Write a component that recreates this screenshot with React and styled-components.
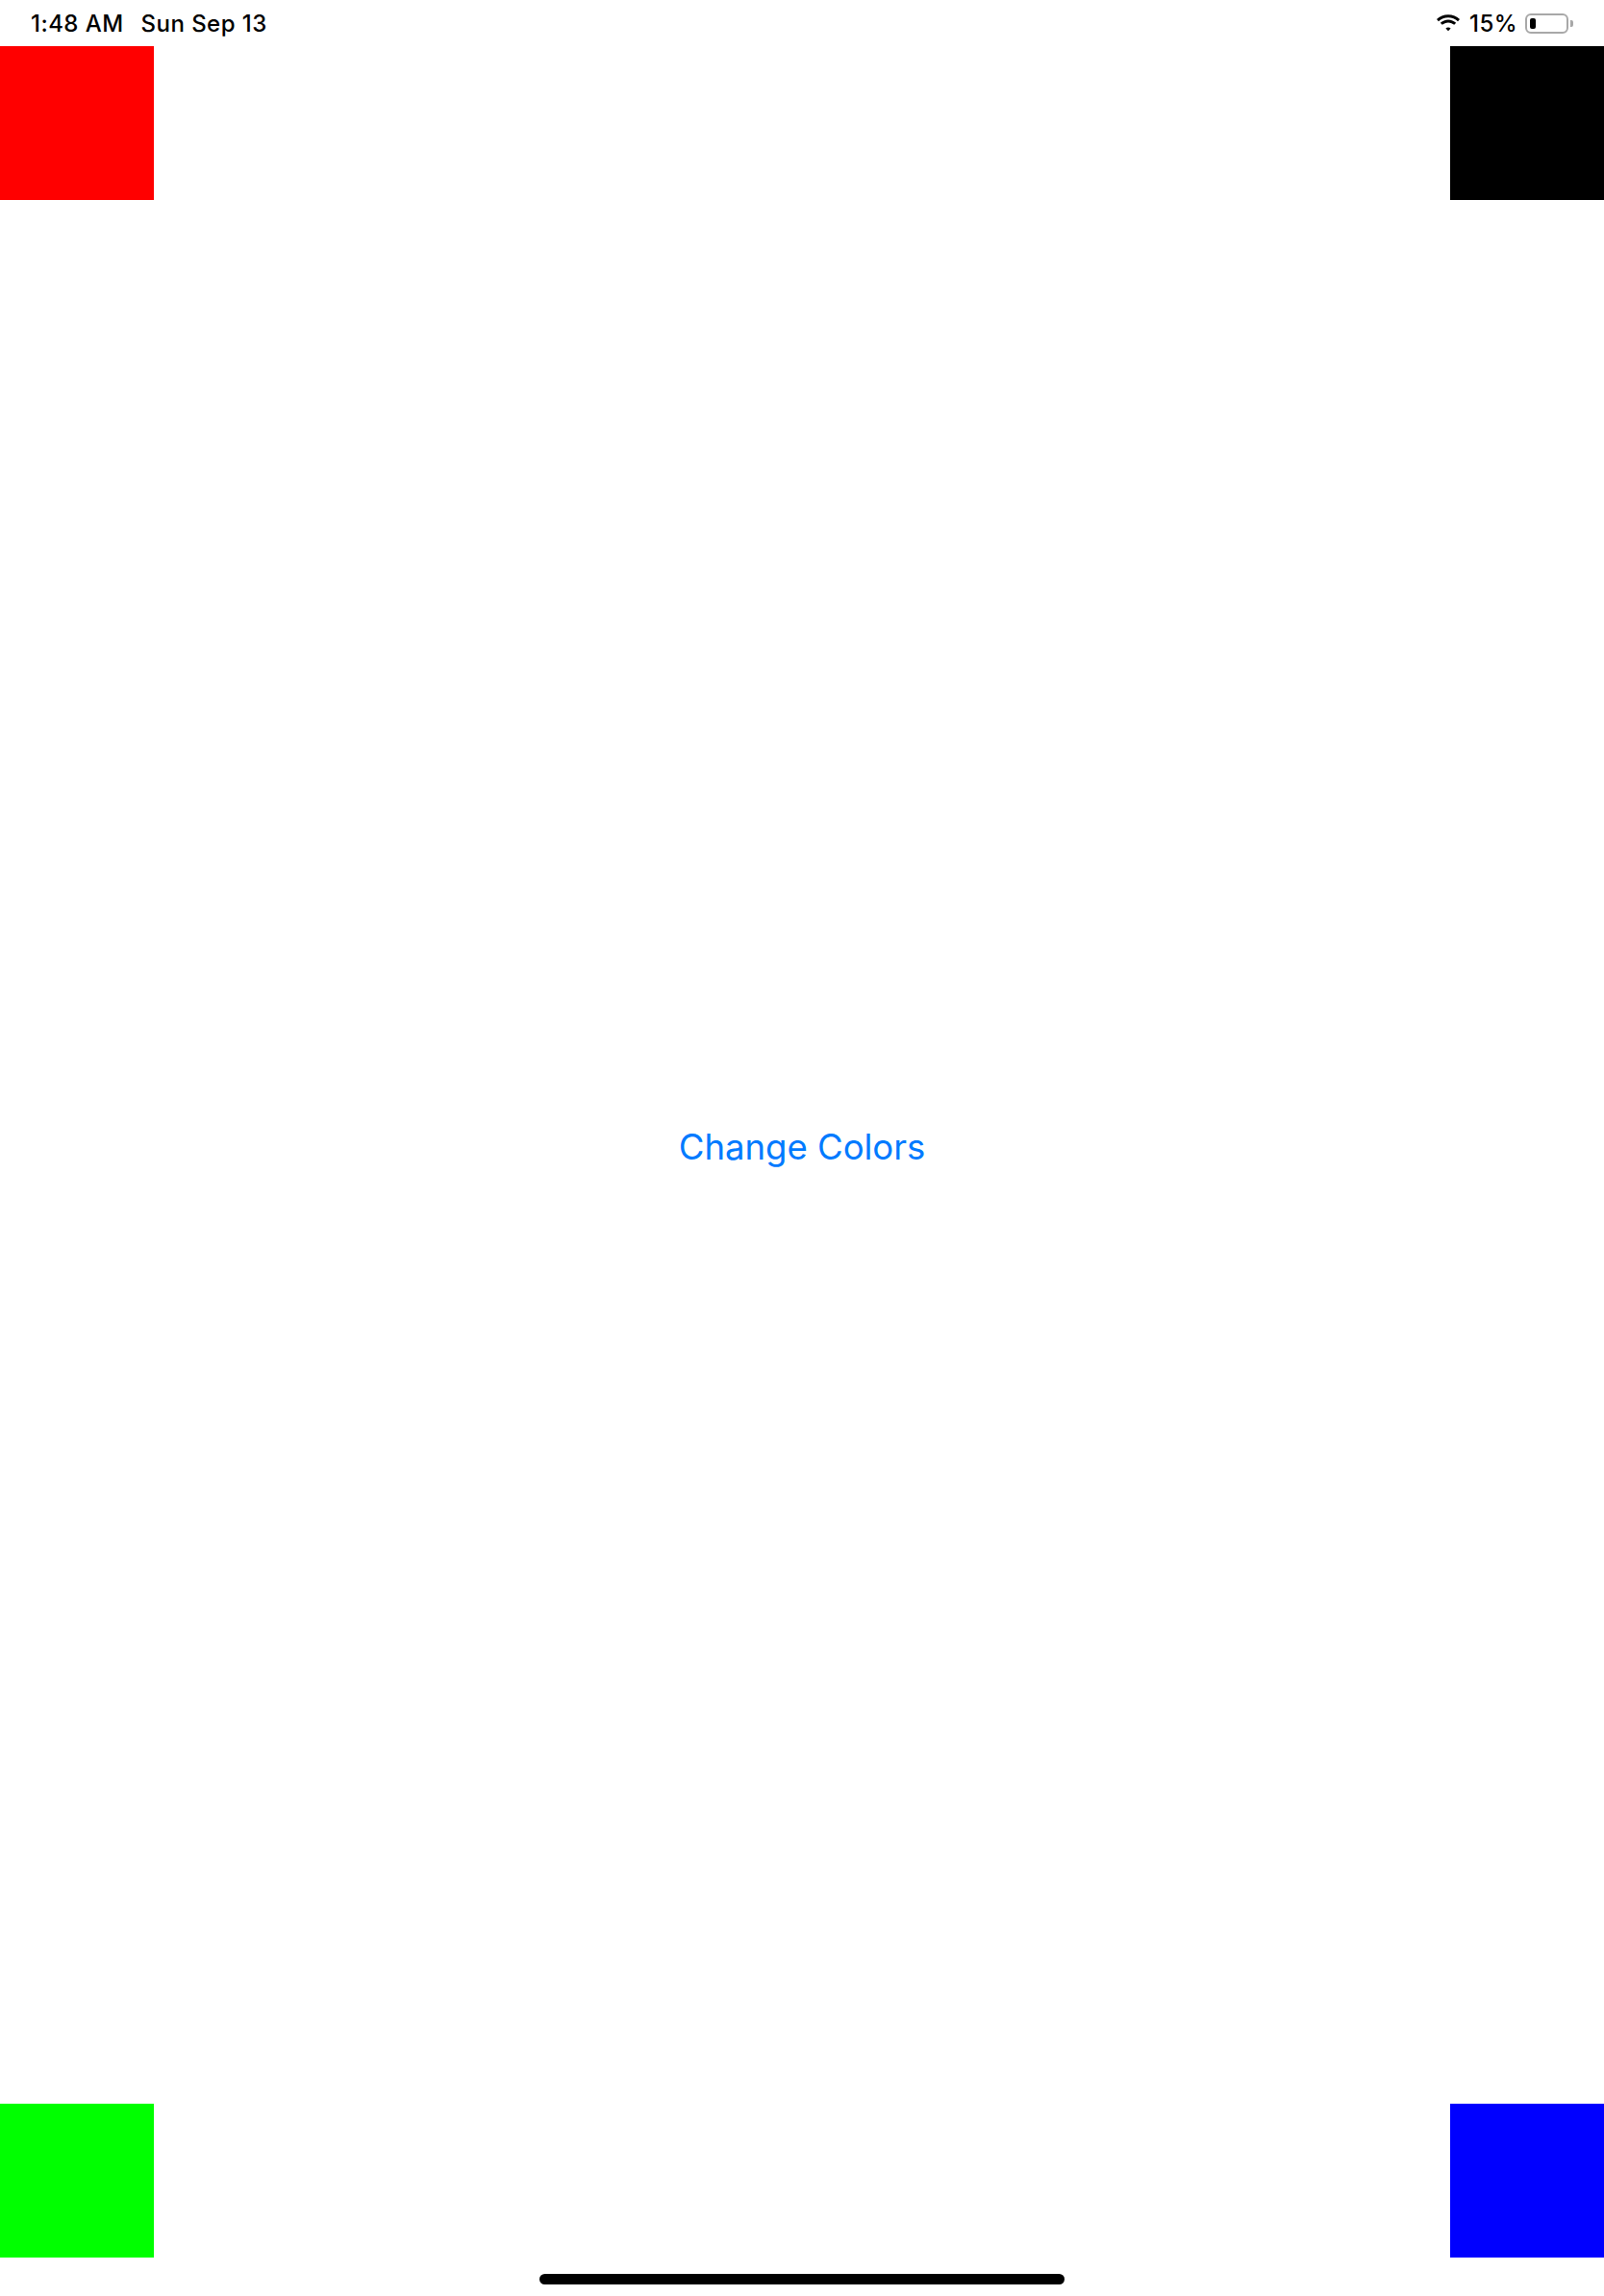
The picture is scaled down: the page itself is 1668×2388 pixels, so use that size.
import styled, { createGlobalStyle } from "styled-components";

const GlobalStyle = createGlobalStyle`
   html, body {
      margin: 0;
      padding: 0;
      background: #fff;
   }
   body {
      font-family: Inter, "Liberation Sans", sans-serif;
   }
`;

const corners = {
   topLeft: "#ff0000",
   topRight: "#000000",
   bottomLeft: "#00ff00",
   bottomRight: "#0000ff",
};

const WifiIcon = () => (
   <svg width="28" height="20" viewBox="0 0 28 20">
      <path
         d="M14 4.2c3.9 0 7.4 1.5 10 4l2-2.1C22.9 3 18.7 1.2 14 1.2S5.1 3 2 6.1l2 2.1c2.6-2.5 6.1-4 10-4z"
         fill="#000"
      />
      <path
         d="M14 9.4c2.4 0 4.6.9 6.2 2.4l2-2.1c-2.2-2-5.1-3.3-8.2-3.3s-6 1.3-8.2 3.3l2 2.1c1.6-1.5 3.8-2.4 6.2-2.4z"
         fill="#000"
      />
      <path
         d="M14 14.4c1 0 1.9.4 2.6 1L14 18.2l-2.6-2.8c.7-.6 1.6-1 2.6-1z"
         fill="#000"
      />
   </svg>
);

const App = () => {
   return (
      <Page>
         <GlobalStyle />
         <StatusBar>
            <Left>
               <StatusText>1:48 AM</StatusText>
               <StatusText>Sun Sep 13</StatusText>
            </Left>
            <Right>
               <WifiIcon />
               <StatusText>15%</StatusText>
               <Battery>
                  <BatteryFill />
               </Battery>
               <BatteryCap />
            </Right>
         </StatusBar>
         <CornerRow>
            <Square color={corners.topLeft} />
            <Square color={corners.topRight} />
         </CornerRow>
         <Middle>
            <ChangeButton>Change Colors</ChangeButton>
         </Middle>
         <CornerRow>
            <Square color={corners.bottomLeft} />
            <Square color={corners.bottomRight} />
         </CornerRow>
         <HomeArea>
            <HomeIndicator />
         </HomeArea>
      </Page>
   );
};

const Page = styled.div`
   height: 2388px;
   width: 1668px;
   display: flex;
   flex-direction: column;
   background: #fff;
`;

const StatusBar = styled.div`
   height: 48px;
   display: flex;
   align-items: center;
   justify-content: space-between;
   padding: 0 32px 0 32px;
   box-sizing: border-box;
`;

const Left = styled.div`
   display: flex;
   align-items: center;
   gap: 18px;
`;

const Right = styled.div`
   display: flex;
   align-items: center;
   gap: 8px;
`;

const StatusText = styled.span`
   font-size: 24px;
   font-weight: 500;
   color: #000;
   letter-spacing: 0.45px;
`;

const Battery = styled.div`
   width: 45px;
   height: 21px;
   box-sizing: border-box;
   border: 2px solid #a8a8a8;
   border-radius: 6px;
   padding: 3px;
   display: flex;
`;

const BatteryFill = styled.div`
   width: 6px;
   height: 100%;
   background: #000;
   border-radius: 2px;
`;

const BatteryCap = styled.div`
   width: 3px;
   height: 7px;
   background: #a8a8a8;
   border-radius: 0 2px 2px 0;
   margin-left: -6px;
`;

const CornerRow = styled.div`
   display: flex;
   justify-content: space-between;
`;

const Square = styled.div`
   width: 160px;
   height: 160px;
   background: ${(props) => props.color};
`;

const Middle = styled.div`
   flex: 1;
   display: flex;
   align-items: center;
   justify-content: center;
`;

const ChangeButton = styled.button`
   background: none;
   border: none;
   padding: 0;
   cursor: pointer;
   font-family: Inter, "Liberation Sans", sans-serif;
   font-size: 36.5px;
   color: #007aff;
   margin-top: -10px;
`;

const HomeArea = styled.div`
   height: 40px;
   display: flex;
   justify-content: center;
   padding-top: 17px;
   box-sizing: border-box;
`;

const HomeIndicator = styled.div`
   width: 546px;
   height: 11px;
   background: #000;
   border-radius: 6px;
`;

export default App;
